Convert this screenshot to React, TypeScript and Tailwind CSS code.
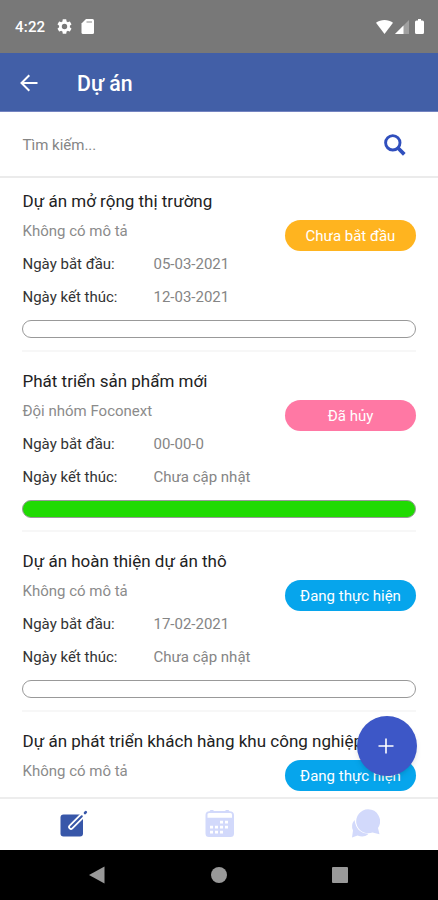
import React from "react";

type Project = {
  name: string;
  description: string;
  start: string;
  end: string;
  status: string;
  badge: string;
  done?: boolean;
};

const projects: Project[] = [
  {
    name: "Dự án mở rộng thị trường",
    description: "Không có mô tả",
    start: "05-03-2021",
    end: "12-03-2021",
    status: "Chưa bắt đầu",
    badge: "bg-[#ffb41f]",
  },
  {
    name: "Phát triển sản phẩm mới",
    description: "Đội nhóm Foconext",
    start: "00-00-0",
    end: "Chưa cập nhật",
    status: "Đã hủy",
    badge: "bg-[#ff78a4]",
    done: true,
  },
  {
    name: "Dự án hoàn thiện dự án thô",
    description: "Không có mô tả",
    start: "17-02-2021",
    end: "Chưa cập nhật",
    status: "Đang thực hiện",
    badge: "bg-[#06a5ec]",
  },
];

const lastProject = {
  name: "Dự án phát triển khách hàng khu công nghiệp",
  description: "Không có mô tả",
  status: "Đang thực hiện",
  badge: "bg-[#06a5ec]",
};

const StatusBar = () => (
  <div className="flex h-[53px] shrink-0 items-center bg-[#787878] pl-[15px] pr-[14px] text-white">
    <span className="w-[42px] pt-px text-[15px] font-medium tracking-[0.2px]">4:22</span>
    <svg className="h-[15px] w-[15px]" viewBox="2 2 20 20" fill="currentColor">
      <path d="M19.14 12.94c.04-.3.06-.61.06-.94 0-.32-.02-.64-.07-.94l2.03-1.58a.49.49 0 0 0 .12-.61l-1.92-3.32a.49.49 0 0 0-.59-.22l-2.39.96c-.5-.38-1.03-.7-1.62-.94l-.36-2.54a.48.48 0 0 0-.48-.41h-3.84c-.24 0-.43.17-.47.41l-.36 2.54c-.59.24-1.13.57-1.62.94l-2.39-.96a.49.49 0 0 0-.59.22L2.74 8.87a.48.48 0 0 0 .12.61l2.03 1.58c-.05.3-.09.63-.09.94s.02.64.07.94l-2.03 1.58a.49.49 0 0 0-.12.61l1.92 3.32c.12.22.37.29.59.22l2.39-.96c.5.38 1.03.7 1.62.94l.36 2.54c.05.24.24.41.48.41h3.84c.24 0 .44-.17.47-.41l.36-2.54c.59-.24 1.13-.56 1.62-.94l2.39.96c.22.08.47 0 .59-.22l1.92-3.32a.49.49 0 0 0-.12-.61zM12 15.6A3.6 3.6 0 1 1 12 8.4a3.6 3.6 0 0 1 0 7.2z" />
    </svg>
    <svg className="ml-[9px] h-[15px] w-[13px]" viewBox="0 0 13 15" fill="currentColor">
      <path d="M5 0H11.5A1.5 1.5 0 0 1 13 1.5V13.5A1.5 1.5 0 0 1 11.5 15H2A1.5 1.5 0 0 1 .5 13.5V4.5Z" />
      <path d="M5.5 3H11" stroke="#787878" strokeWidth="1.4" opacity=".6" />
    </svg>
    <svg className="ml-auto h-[14px] w-[17px]" viewBox="0 0 17 14" fill="currentColor">
      <path d="M0 2.8C5-.9 12-.9 17 2.8L8.5 14Z" />
    </svg>
    <svg className="ml-[2px] h-[14px] w-[14px]" viewBox="0 0 14 14" fill="currentColor">
      <path d="M14 0V14H0Z" opacity=".3" />
      <path d="M8.5 5.5V14H0Z" />
    </svg>
    <svg className="ml-[6px] h-[15px] w-[9px]" viewBox="0 0 9 15" fill="currentColor">
      <path d="M3 0H6V1.5H7.5Q9 1.500 9 3V13.5Q9 15 7.5 15H1.5Q0 15 0 13.5V3Q0 1.5 1.5 1.5H3Z" />
    </svg>
  </div>
);

const Header = () => (
  <div className="flex h-[59px] shrink-0 items-center border-b border-[#7383c0] bg-[#425fa7] pl-5 text-white">
    <svg className="mt-px h-[18px] w-[18px]" viewBox="0 0 18 18" fill="none" stroke="currentColor" strokeWidth="2">
      <path d="M17.5 9H2M9.3 1.2L1.5 9L9.3 16.8" />
    </svg>
    <h1 className="ml-[39px] mt-[4px] text-[21.3px] font-medium">Dự án</h1>
  </div>
);

const SearchBar = () => (
  <div className="flex h-[66px] shrink-0 items-center justify-between border-b-2 border-[#ebebeb] pl-[22.5px] pr-8 pt-[2px]">
    <span className="text-[15px] text-[#858585]">Tìm kiếm...</span>
    <svg className="h-[22px] w-[22px] text-[#304fbd]" viewBox="0 0 22 22" fill="none" stroke="currentColor">
      <circle cx="8.8" cy="8.8" r="7.2" strokeWidth="2.9" />
      <path d="M14 14L20.3 20.3" strokeWidth="3.8" />
    </svg>
  </div>
);

type SummaryProps = Pick<Project, "name" | "description" | "status" | "badge">;

const ProjectSummary = ({ name, description, status, badge }: SummaryProps) => (
  <>
    <h2 className="whitespace-nowrap pl-[0.5px] pt-[10px] text-[17px] leading-[26px] text-[#222]">{name}</h2>
    <div className="flex h-9 justify-between">
      <p className="pl-[0.5px] pt-[7px] text-[15px] leading-5 text-[#8b8b8b]">{description}</p>
      <span
        className={`mt-[6px] flex h-[31px] w-[131px] items-center justify-center rounded-full pt-px text-[15px] text-white ${badge}`}
      >
        {status}
      </span>
    </div>
  </>
);

const ProjectItem = ({ project }: { project: Project }) => (
  <div className="mx-[22px] h-[180px] shrink-0">
    <ProjectSummary {...project} />
    <div className="flex h-[33px] pl-[0.5px] pt-[4px] text-[15px] leading-5">
      <span className="w-[131px] text-[#333]">Ngày bắt đầu:</span>
      <span className="text-[#858585]">{project.start}</span>
    </div>
    <div className="flex h-[37px] pl-[0.5px] pt-[4px] text-[15px] leading-5">
      <span className="w-[131px] text-[#333]">Ngày kết thúc:</span>
      <span className="text-[#858585]">{project.end}</span>
    </div>
    <div
      className={`h-[18px] rounded-full border border-[#999] ${project.done ? "bg-[#20da03]" : "bg-white"}`}
    />
    <div className="mt-3 h-[2px] bg-[#f7f7f7]" />
  </div>
);

const TabBar = () => (
  <div className="flex h-[53px] shrink-0 justify-around border-t-2 border-[#ededed] bg-white pt-[10px]">
    <svg className="h-[30px] w-[30px]" viewBox="0 0 30 30" fill="none">
      <rect x="2.5" y="5.5" width="22.5" height="22" rx="3" fill="#3857a9" />
      {/* pen */}
      <path d="M13 18L27 4" stroke="white" strokeWidth="5.6" strokeLinecap="round" />
      <path d="M13 18L23.8 7.2" stroke="#3857a9" strokeWidth="2" strokeLinecap="round" />
      <path d="M27 4L27.8 3.2" stroke="#3857a9" strokeWidth="2.6" strokeLinecap="round" />
    </svg>
    <svg className="h-[30px] w-[30px]" viewBox="0 0 30 30">
      <path
        d="M6.5 1H9L10 2H21L22 1H24.5L25.5 2.2Q30 2.5 30 6V24.5Q30 28 26.5 28H5Q1.5 28 1.5 24.5V6Q1.5 2.5 5.5 2.2Z"
        fill="#d2d9fb"
      />
      <path d="M5 4H26.5Q28 4 28 5.5V8.8H3.5V5.5Q3.5 4 5 4Z" fill="white" />
      <path
        d="M16 13.2H19M21 13.2H24M6 18.2H9M11 18.2H14M16 18.2H19M21 18.2H24M6 23.2H9M11 23.2H14M16 23.2H19"
        stroke="white"
        strokeWidth="2.8"
      />
    </svg>
    <svg className="h-[30px] w-[30px]" viewBox="0 0 30 30" fill="#d2d9fb">
      <path d="M4.5 11Q.5 16 3 21.5L2 28.5L7.5 26.5Q13.5 29 18 25.5L17.5 24.5Q6.5 24 4.5 11Z" />
      <path d="M18 .3A12 12 0 1 0 22.5 23.5L29.5 25.2L28 19A12 12 0 0 0 18 .3Z" />
    </svg>
  </div>
);

const NavigationBar = () => (
  <div className="flex h-[50px] shrink-0 items-center bg-black pl-[88px] text-[#999]">
    <svg className="h-[18px] w-[17px]" viewBox="0 0 17 18" fill="currentColor">
      <path d="M16.5 0.5V17.5L1 9Z" />
    </svg>
    <div className="ml-[106px] h-4 w-4 rounded-full bg-[#999]" />
    <div className="ml-[105px] h-4 w-4 rounded-[1px] bg-[#999]" />
  </div>
);

const App = () => {
  return (
    <div className="flex h-[900px] w-[438px] flex-col overflow-hidden bg-white font-[Roboto,sans-serif]">
      <StatusBar />
      <Header />
      <SearchBar />
      <div className="relative min-h-0 flex-1">
        <div className="flex h-full flex-col overflow-hidden">
          {projects.map((project) => (
            <ProjectItem key={project.name} project={project} />
          ))}
          <div className="mx-[22px] shrink-0">
            <ProjectSummary {...lastProject} />
          </div>
        </div>
        {/* Add project */}
        <button className="absolute bottom-[21px] right-[21px] flex h-[60px] w-[60px] items-center justify-center rounded-full bg-[#3d57c7] pr-[2px] shadow-md">
          <svg className="h-4 w-4" viewBox="0 0 16 16" stroke="white" strokeWidth="1.6">
            <path d="M8 .5V15.5M.5 8H15.5" />
          </svg>
        </button>
      </div>
      <TabBar />
      <NavigationBar />
    </div>
  );
};

export default App;
